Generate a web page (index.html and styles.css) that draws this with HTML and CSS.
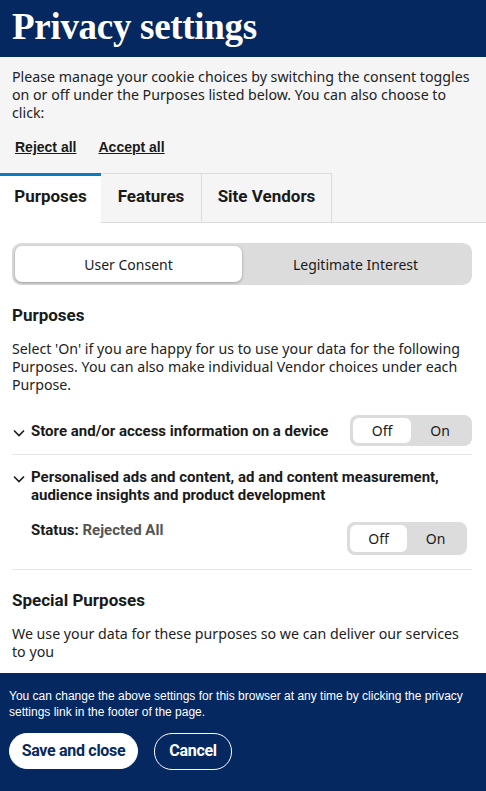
FILE: index.html
```html
<!DOCTYPE html>
<html lang="en">
<head>
<meta charset="utf-8">
<title>Privacy settings</title>
<link rel="stylesheet" href="styles.css">
</head>
<body>
<div class="page">
  <header class="top">
    <h1 class="title">Privacy settings</h1>
  </header>
  <section class="intro">
    <p class="intro-text">Please manage your cookie choices by switching the consent toggles on or off under the Purposes listed below. You can also choose to click:</p>
    <div class="quick">
      <a class="quick-link" href="#">Reject all</a>
      <a class="quick-link" href="#">Accept all</a>
    </div>
  </section>
  <nav class="tabs">
    <div class="tab tab-active">Purposes</div>
    <div class="tab">Features</div>
    <div class="tab tab-wide">Site Vendors</div>
    <div class="tab-fill"></div>
  </nav>
  <main class="content">
    <div class="segment">
      <div class="seg-btn seg-active">User Consent</div>
      <div class="seg-btn">Legitimate Interest</div>
    </div>
    <h2 class="section-title">Purposes</h2>
    <p class="section-text">Select 'On' if you are happy for us to use your data for the following Purposes. You can also make individual Vendor choices under each Purpose.</p>

    <div class="item item-one">
      <div class="item-head">
        <svg class="chev" width="12" height="8" viewBox="0 0 12 8"><polyline points="1,1.5 6,6.5 11,1.5" fill="none" stroke="#1a1a1a" stroke-width="1.6"/></svg>
        <span class="item-title">Store and/or access information on a device</span>
      </div>
      <div class="toggle">
        <span class="tg tg-on">Off</span>
        <span class="tg">On</span>
      </div>
    </div>

    <div class="item item-two">
      <div class="item-head">
        <svg class="chev" width="12" height="8" viewBox="0 0 12 8"><polyline points="1,1.5 6,6.5 11,1.5" fill="none" stroke="#1a1a1a" stroke-width="1.6"/></svg>
        <span class="item-title">Personalised ads and content, ad and content measurement, audience insights and product development</span>
      </div>
      <div class="status-row">
        <div class="status"><span class="status-label">Status:</span> <span class="status-value">Rejected All</span></div>
        <div class="toggle toggle-b">
          <span class="tg tg-on">Off</span>
          <span class="tg">On</span>
        </div>
      </div>
    </div>

    <h2 class="section-title special">Special Purposes</h2>
    <p class="section-text">We use your data for these purposes so we can deliver our services to you</p>
  </main>
  <footer class="foot">
    <p class="foot-text">You can change the above settings for this browser at any time by clicking the privacy settings link in the footer of the page.</p>
    <div class="foot-actions">
      <button class="btn btn-primary">Save and close</button>
      <button class="btn btn-outline">Cancel</button>
    </div>
  </footer>
</div>
</body>
</html>
```

FILE: styles.css
```css
* { box-sizing: border-box; }
html, body { margin: 0; padding: 0; }
body {
  font-family: "Noto Sans", "DejaVu Sans", sans-serif;
  color: #1a1a1a;
  background: #fff;
}
.page {
  height: 100vh;
  display: flex;
  flex-direction: column;
  overflow: hidden;
}
.top {
  background: #052860;
  height: 57px;
  padding: 0 12px;
  flex: none;
}
.title {
  margin: 0;
  font-family: "Liberation Serif", serif;
  font-weight: 700;
  font-size: 37px;
  line-height: 54px;
  color: #fff;
  letter-spacing: -0.3px;
}
.intro {
  background: #f5f5f5;
  padding: 11px 12px 0;
  flex: none;
}
.intro-text {
  margin: 0;
  font-size: 14.2px;
  line-height: 18px;
  color: #222;
}
.quick {
  display: flex;
  gap: 22px;
  padding: 16px 3px 0;
  height: 51px;
}
.quick-link {
  font-family: "Liberation Sans", Arial, sans-serif;
  font-weight: 700;
  font-size: 14px;
  color: #1a1a1a;
  text-decoration: underline;
  line-height: 18px;
}
.tabs {
  display: flex;
  background: #f5f5f5;
  height: 50px;
  flex: none;
}
.tab {
  width: 101px;
  border: 1px solid #dcdcdc;
  border-left: none;
  padding-bottom: 4px;
  display: flex;
  align-items: center;
  justify-content: center;
  font-family: Roboto, "Liberation Sans", sans-serif;
  font-weight: 700;
  font-size: 17px;
  color: #1a1a1a;
}
.tab-wide { width: 130px; }
.tab-active {
  background: #fff;
  border: none;
  border-top: 3px solid #0a7bc2;
  padding-bottom: 7px;
}
.tab-fill {
  flex: 1;
  border-bottom: 1px solid #dcdcdc;
}
.content {
  flex: 1;
  overflow: hidden;
  padding: 20px 14px 0 12px;
}
.segment {
  display: flex;
  background: #dcdcdc;
  border-radius: 9px;
  padding: 3px;
  height: 42px;
}
.seg-btn {
  flex: 1;
  display: flex;
  align-items: center;
  justify-content: center;
  font-size: 14px;
  color: #1a1a1a;
  border-radius: 7px;
}
.seg-active {
  background: #fff;
  box-shadow: 0 1px 3px rgba(0,0,0,0.3);
}
.section-title {
  margin: 19px 0 0;
  font-family: Roboto, "Liberation Sans", sans-serif;
  font-weight: 700;
  font-size: 17px;
  line-height: 22px;
  color: #1a1a1a;
}
.section-text {
  margin: 14px 0 0;
  font-size: 14.2px;
  line-height: 18px;
  color: #222;
}
.item {
  border-bottom: 1px solid #e6e6e6;
}
.item-one {
  margin-top: 21px;
  display: flex;
  align-items: center;
  justify-content: space-between;
  padding-bottom: 8px;
}
.item-head {
  display: flex;
  align-items: flex-start;
  gap: 6px;
}
.chev { flex: none; margin-top: 7px; margin-left: 1px; }
.item-title {
  font-family: Roboto, "Liberation Sans", sans-serif;
  font-weight: 700;
  font-size: 15px;
  line-height: 18px;
  color: #1a1a1a;
}
.toggle {
  display: flex;
  background: #dcdcdc;
  border-radius: 8px;
  padding: 3px;
  width: 122px;
  height: 31px;
  flex: none;
}
.tg {
  flex: 1;
  display: flex;
  align-items: center;
  justify-content: center;
  font-size: 14px;
  color: #1a1a1a;
  border-radius: 6px;
}
.tg-on { background: #fff; }
.item-two {
  padding-top: 13px;
  padding-bottom: 14px;
}
.status-row {
  display: flex;
  justify-content: space-between;
  align-items: flex-start;
  padding: 16px 5px 0 19px;
}
.status {
  font-family: Roboto, "Liberation Sans", sans-serif;
  font-weight: 700;
  font-size: 15px;
  line-height: 20px;
}
.status-label { color: #1a1a1a; }
.status-value { color: #555; }
.toggle-b { width: 120px; height: 33px; margin-top: 2px; }
.special { margin-top: 19px; }
.foot {
  flex: none;
  background: #052860;
  height: 118px;
  padding: 15px 9px 0;
  color: #fff;
}
.foot-text {
  margin: 0;
  font-family: "Liberation Sans", Arial, sans-serif;
  font-size: 12px;
  line-height: 16px;
  color: #fff;
}
.foot-actions {
  display: flex;
  gap: 16px;
  margin-top: 13px;
}
.btn {
  height: 36px;
  border-radius: 18px;
  font-family: Roboto, "Liberation Sans", sans-serif;
  font-weight: 700;
  font-size: 16px;
  letter-spacing: -0.3px;
  padding: 0 8px 2px;
  white-space: nowrap;
}
.btn-primary {
  background: #fff;
  color: #052860;
  border: 1px solid #fff;
  width: 129px;
}
.btn-outline {
  background: transparent;
  color: #fff;
  border: 1px solid #fff;
  width: 78px;
  height: 37px;
}
```
